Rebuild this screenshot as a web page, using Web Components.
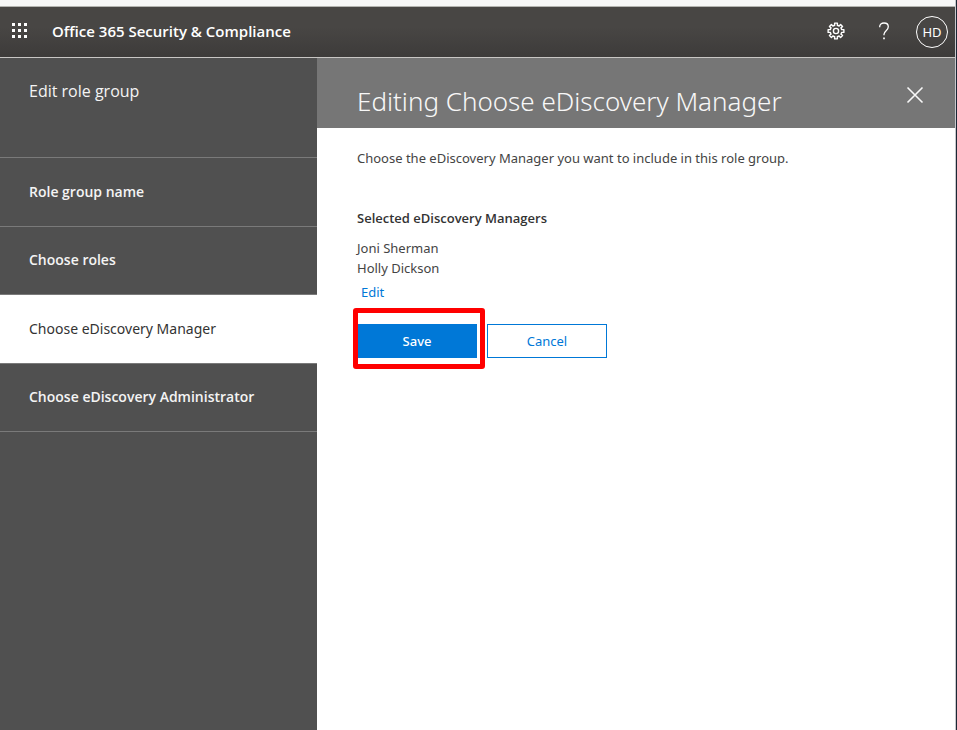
<!DOCTYPE html>
<html lang="en">
<head>
<meta charset="utf-8">
<meta name="viewport" content="width=device-width, initial-scale=1">
<title>Office 365 Security &amp; Compliance</title>
<style>
html, body { height: 100%; }
body { --strong-font: "Open Sans", sans-serif; margin: 0; font-family: "Noto Sans", "Open Sans", sans-serif; font-size: 13px; line-height: 20px; color: #444; background: #fff; }
</style>
</head>
<body>
<compliance-app>
  <suite-header slot="header" initials="HD">Office 365 Security &amp; Compliance</suite-header>
  <step-nav slot="nav" heading="Edit role group">
    <step-item>Role group name</step-item>
    <step-item>Choose roles</step-item>
    <step-item current>Choose eDiscovery Manager</step-item>
    <step-item>Choose eDiscovery Administrator</step-item>
  </step-nav>
  <edit-panel heading="Editing Choose eDiscovery Manager">
    <manager-form></manager-form>
  </edit-panel>
</compliance-app>
<script>
class BaseElement extends HTMLElement {
  constructor() {
    super();
    this.attachShadow({ mode: "open" }).innerHTML = this.constructor.markup;
  }
}

customElements.define("compliance-app", class extends BaseElement {
  static markup = `
    <style>
      :host { display: grid; box-sizing: border-box; min-height: 100%; grid-template: auto 1fr / minmax(200px, 317fr) 638fr;
        border-right: 1px solid #1b2735; box-shadow: inset -1px 0 #c8c8cc; padding-right: 1px; }
      header { grid-column: 1 / -1; }
      main { min-width: 0; }
    </style>
    <header><slot name="header"></slot></header>
    <slot name="nav"></slot>
    <main><slot></slot></main>`;
});

customElements.define("suite-header", class extends BaseElement {
  static markup = `
    <style>
      :host { display: block; border-top: 6px solid #f7f7f7; }
      .bar { display: flex; align-items: center; height: 50px; color: #fff;
        border-top: 1px solid #b4b4b0; border-bottom: 1px solid #c8c6c4;
        background: linear-gradient(#484644, #484644 40%, #3d3b3a); }
      button { font: inherit; color: inherit; background: none; border: 0; padding: 0; display: grid; place-items: center; width: 48px; height: 48px; }
      .apps { width: 40px; }
      h1 { flex: 1; margin: 0 0 2px 12px; font: 600 15px/20px var(--strong-font); }
      svg { display: block; margin-bottom: 2px; }
      .me { width: 32px; height: 32px; box-sizing: border-box; border: 1px solid #fff; border-radius: 50%; margin: 0 7px 0 8px; font-size: 13px; line-height: 20px; }
    </style>
    <div class="bar">
      <button class="apps" aria-label="App launcher">
        <svg width="16" height="16" viewBox="0 0 16 16" fill="#fff"><path d="M0 0h3v3H0zM6 0h3v3H6zM12 0h3v3H12zM0 6h3v3H0zM6 6h3v3H6zM12 6h3v3H12zM0 12h3v3H0zM6 12h3v3H6zM12 12h3v3H12z"/></svg>
      </button>
      <h1><slot></slot></h1>
      <button aria-label="Settings">
        <svg width="18" height="18" viewBox="0 0 18 18" fill="none" stroke="#fff" stroke-width="1.4" stroke-linejoin="round"><path class="gear"/><circle cx="9" cy="9" r="2.6"/></svg>
      </button>
      <button aria-label="Help">
        <svg width="12" height="18" viewBox="0 0 12 18" fill="none" stroke="#fff" stroke-width="1.3"><path d="M1.7 5.2V4.8C1.7 2.4 3.5 1 6 1s4.3 1.5 4.3 3.8c0 1.9-1 2.9-2.2 4C6.8 10 6 10.9 6 12.3V13.2"/><path d="M6 15.500v1.700" stroke-width="1.700"/></svg>
      </button>
      <button class="me" aria-label="Account"></button>
    </div>`;
  connectedCallback() {
    this.shadowRoot.querySelector(".me").textContent = this.getAttribute("initials");
    // Eight square teeth around the centre of the icon.
    const points = [];
    for (let i = 0; i < 8; i++) {
      for (const [offset, radius] of [[-13, 5.9], [-10, 8], [10, 8], [13, 5.9]]) {
        const a = (i * 45 + offset) * Math.PI / 180;
        points.push((9 + radius * Math.cos(a)).toFixed(2) + " " + (9 + radius * Math.sin(a)).toFixed(2));
      }
    }
    this.shadowRoot.querySelector(".gear").setAttribute("d", "M" + points.join("L") + "Z");
  }
});

customElements.define("step-nav", class extends BaseElement {
  static markup = `
    <style>
      :host { display: block; background: #505050; color: #f4f4f4; }
      h2 { margin: 0; padding: 22px 29px 54px; border-bottom: 1px solid #7a7a7a; font: 400 16px/23px var(--strong-font); }
      nav { display: grid; grid-auto-rows: 1fr; min-height: 274px; }
    </style>
    <h2></h2>
    <nav aria-label="Steps"><slot></slot></nav>`;
  connectedCallback() {
    this.shadowRoot.querySelector("h2").textContent = this.getAttribute("heading");
  }
});

customElements.define("step-item", class extends BaseElement {
  static markup = `
    <style>
      :host { display: grid; border-bottom: 1px solid #7a7a7a; font: 600 14px/20px var(--strong-font); }
      :host([current]) { background: #fff; color: #333; font: 400 14px/20px "Noto Sans", sans-serif; }
      a { display: flex; align-items: center; padding: 0 29px; color: inherit; text-decoration: none; }
    </style>
    <a href="#"><span><slot></slot></span></a>`;
  connectedCallback() {
    if (this.hasAttribute("current")) this.shadowRoot.querySelector("a").setAttribute("aria-current", "step");
  }
});

customElements.define("edit-panel", class extends BaseElement {
  static markup = `
    <style>
      :host { display: block; }
      .title { display: flex; justify-content: space-between; align-items: flex-start; background: #767676; color: #f8f8f8; padding: 21px 24px 9px 40px; }
      h2 { margin: 4px 0 0; font-size: 26px; line-height: 36px; font-weight: 300; }
      button { display: grid; place-items: center; width: 32px; height: 32px; padding: 0; border: 0; background: none; color: inherit; }
      .body { padding: 20px 40px; }
    </style>
    <div class="title">
      <h2></h2>
      <button aria-label="Close"><svg width="18" height="18" viewBox="0 0 18 18" fill="none" stroke="currentColor" stroke-width="1.6"><path d="M1.500 1.500l15 15M16.500 1.500l-15 15"/></svg></button>
    </div>
    <div class="body"><slot></slot></div>`;
  connectedCallback() {
    this.shadowRoot.querySelector("h2").textContent = this.getAttribute("heading");
  }
});

customElements.define("action-button", class extends BaseElement {
  static markup = `
    <style>
      :host { display: block; }
      button { display: block; min-width: 120px; height: 34px; padding: 0 16px; border: 1px solid #0078d7; background: #fff; color: #0078d7; font: inherit; }
      :host([primary]) button { background: #0078d7; color: #fff; font-weight: 500; }
    </style>
    <button type="button"><slot></slot></button>`;
});

customElements.define("manager-form", class extends BaseElement {
  static markup = `
    <style>
      :host { display: block; }
      p { margin: 0 0 40px; }
      h3 { margin: 0 0 10px; color: #333; font: 600 13px/20px var(--strong-font); }
      ul { margin: 0; padding: 0; list-style: none; }
      .edit { display: inline-block; margin: 4px 4px 22px; color: #0078d7; text-decoration: none; }
      .actions { display: flex; gap: 10px; }
      .marked { position: relative; }
      .marked::after { content: ""; position: absolute; inset: -16px -8px -11px -4px; border: 5px solid #f00; border-radius: 3px; pointer-events: none; }
    </style>
    <p>Choose the eDiscovery Manager you want to include in this role group.</p>
    <h3>Selected eDiscovery Managers</h3>
    <ul><li>Joni Sherman</li><li>Holly Dickson</li></ul>
    <a class="edit" href="#">Edit</a>
    <div class="actions">
      <action-button class="marked" primary>Save</action-button>
      <action-button>Cancel</action-button>
    </div>`;
});
</script>
</body>
</html>
